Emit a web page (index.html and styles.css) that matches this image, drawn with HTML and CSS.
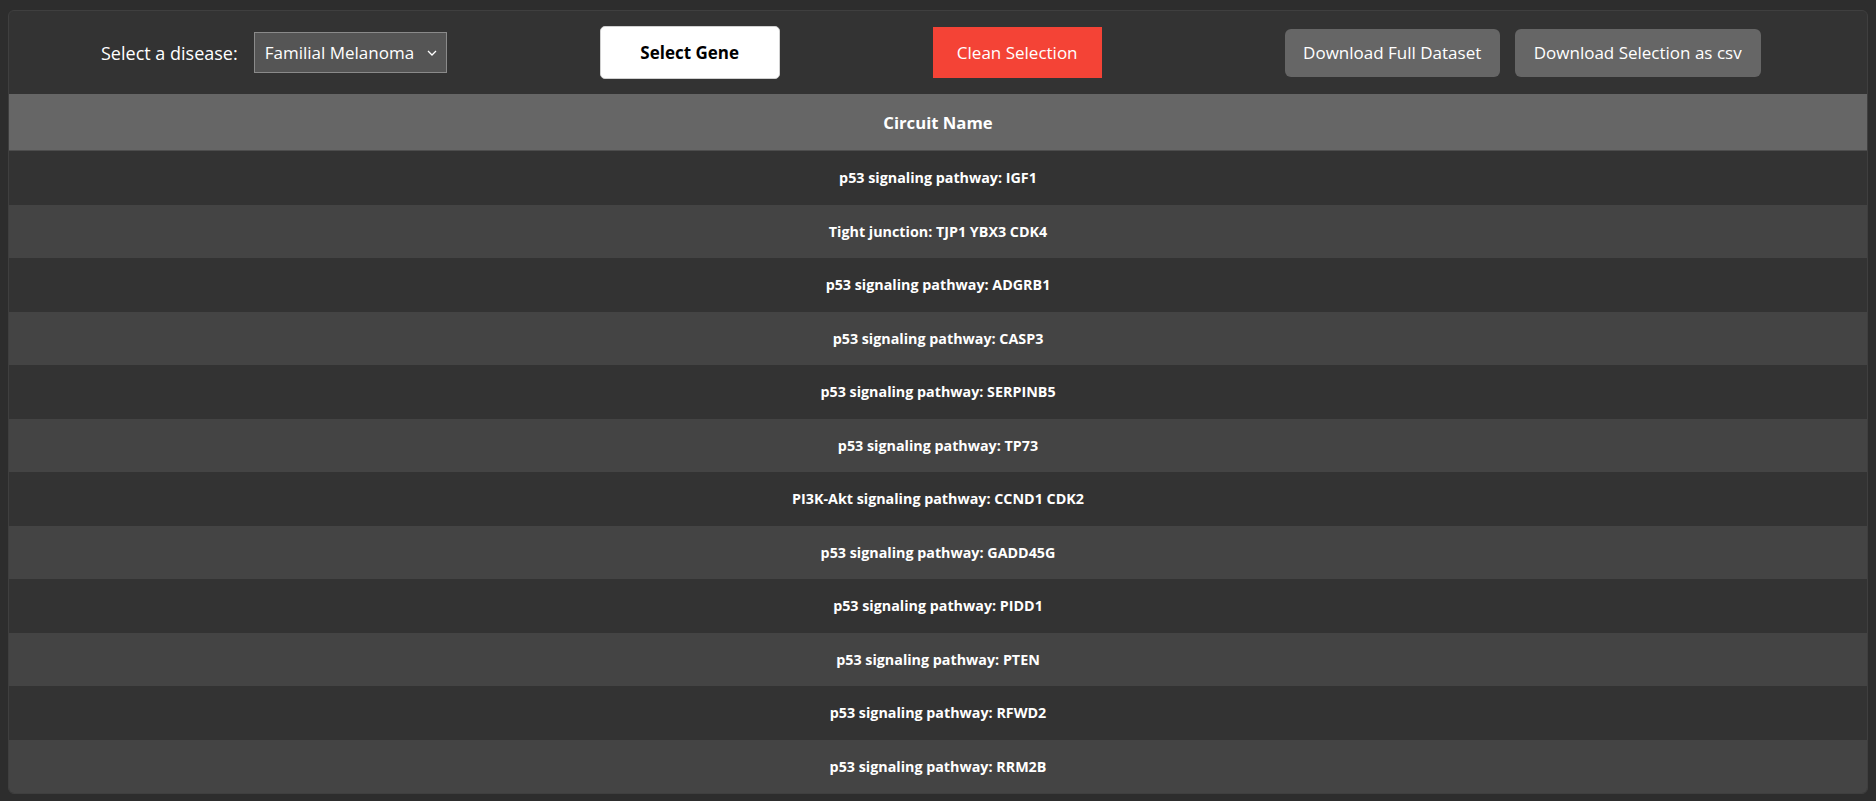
FILE: index.html
```html
<!DOCTYPE html>
<html lang="en">
<head>
<meta charset="utf-8">
<title>Circuits</title>
<link rel="stylesheet" href="styles.css">
</head>
<body>
<div class="card">
  <div class="toolbar">
    <div class="disease">
      <label class="disease-label" for="disease">Select a disease:</label>
      <div class="select-wrap">
        <select id="disease" class="select">
          <option>Familial Melanoma</option>
        </select>
        <svg class="chev" viewBox="0 0 10 6" width="10" height="6"><path d="M1 1 L5 5 L9 1" fill="none" stroke="#fff" stroke-width="1.3"/></svg>
      </div>
    </div>
    <button class="btn btn-gene">Select Gene</button>
    <button class="btn btn-clean">Clean Selection</button>
    <div class="downloads">
      <button class="btn btn-dl btn-full">Download Full Dataset</button>
      <button class="btn btn-dl btn-sel">Download Selection as csv</button>
    </div>
  </div>
  <table class="grid">
    <thead>
      <tr><th>Circuit Name</th></tr>
    </thead>
    <tbody>
      <tr><td>p53 signaling pathway: IGF1</td></tr>
      <tr><td>Tight junction: TJP1 YBX3 CDK4</td></tr>
      <tr><td>p53 signaling pathway: ADGRB1</td></tr>
      <tr><td>p53 signaling pathway: CASP3</td></tr>
      <tr><td>p53 signaling pathway: SERPINB5</td></tr>
      <tr><td>p53 signaling pathway: TP73</td></tr>
      <tr><td>PI3K-Akt signaling pathway: CCND1 CDK2</td></tr>
      <tr><td>p53 signaling pathway: GADD45G</td></tr>
      <tr><td>p53 signaling pathway: PIDD1</td></tr>
      <tr><td>p53 signaling pathway: PTEN</td></tr>
      <tr><td>p53 signaling pathway: RFWD2</td></tr>
      <tr><td>p53 signaling pathway: RRM2B</td></tr>
    </tbody>
  </table>
</div>
</body>
</html>
```
FILE: styles.css
```css
html, body {
  background: #2d2d2d;
}
body {
  margin: 8px;
  margin-top: 10px;
  font-family: "Segoe UI", "Open Sans", "Noto Sans", sans-serif;
  color: #fff;
}
.card {
  background: #333333;
  border: 1px solid #3f3f3f;
  border-radius: 6px;
  overflow: hidden;
}
.toolbar {
  height: 83px;
  display: flex;
  align-items: center;
  padding-left: 92px;
}
.disease {
  display: flex;
  align-items: center;
  gap: 16px;
}
.disease-label {
  font-size: 18px;
  color: #fff;
}
.select-wrap {
  position: relative;
  width: 193px;
  height: 41px;
}
.select {
  appearance: none;
  -webkit-appearance: none;
  width: 100%;
  height: 100%;
  box-sizing: border-box;
  background: #555555;
  border: 1px solid #8a8a8a;
  border-radius: 0;
  color: #fff;
  font-family: inherit;
  font-size: 17px;
  padding: 0 0 0 10px;
  outline: none;
}
.chev {
  position: absolute;
  right: 10px;
  top: 18px;
  pointer-events: none;
}
.btn {
  font-family: inherit;
  border: none;
  cursor: pointer;
  padding: 0;
  box-sizing: border-box;
}
.btn-gene {
  margin-left: 153px;
  width: 180px;
  height: 53px;
  background: #fff;
  color: #000;
  font-weight: 700;
  font-size: 17px;
  border: 1px solid #d0d0d0;
  border-radius: 5px;
}
.btn-clean {
  margin-left: 153px;
  width: 169px;
  height: 51px;
  background: #f44336;
  color: #fff;
  font-size: 17px;
}
.downloads {
  margin-left: 183px;
  display: flex;
  gap: 15px;
}
.btn-dl {
  height: 48px;
  background: #666666;
  color: #fff;
  font-size: 17px;
  border-radius: 6px;
}
.btn-full { width: 215px; }
.btn-sel { width: 246px; }
.grid {
  width: 100%;
  border-collapse: collapse;
}
.grid th {
  height: 56px;
  background: #666666;
  border-bottom: 1px solid #4d4d4d;
  font-size: 16.7px;
  font-weight: 700;
  text-align: center;
  padding: 0;
}
.grid td {
  height: 53.5px;
  padding: 0;
  text-align: center;
  font-size: 14.3px;
  font-weight: 700;
}
.grid tbody tr:nth-child(odd) td { background: #333333; }
.grid tbody tr:nth-child(even) td { background: #444444; }
```
